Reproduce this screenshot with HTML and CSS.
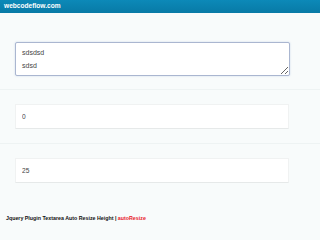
FILE: index.html
```html
<!DOCTYPE html>
<html>
<head>
<meta charset="utf-8">
<link rel="stylesheet" href="styles.css">
</head>
<body>
<header class="topbar"><span class="brand">webcodeflow.com</span></header>
<main class="content">
  <section class="row first">
    <textarea class="auto">sdsdsd
sdsd</textarea>
  </section>
  <section class="row">
    <input class="field" type="text" value="0">
  </section>
  <section class="row">
    <input class="field" type="text" value="25">
  </section>
  <p class="footer">Jquery Plugin Textarea Auto Resize Height | <span class="accent">autoResize</span></p>
</main>
</body>
</html>
```
FILE: styles.css
```css
html, body {
  margin: 0;
  padding: 0;
}
body {
  background: #f8fbfb;
  font-family: "Liberation Sans", Arial, sans-serif;
}
.topbar {
  height: 13px;
  background: linear-gradient(#0c89b8, #087aa6);
  display: flex;
  align-items: center;
  padding-left: 4px;
}
.brand {
  color: #fff;
  font-weight: bold;
  font-size: 6.6px;
  line-height: 1;
}
.content {
  display: flex;
  flex-direction: column;
}
.row {
  padding: 14px 10px 14px 15px;
  border-top: 1px solid #eef3f3;
}
.row.first {
  border-top: none;
  padding-top: 29px;
  padding-bottom: 13px;
}
.auto {
  display: block;
  box-sizing: border-box;
  width: 275px;
  height: 34px;
  margin: 0;
  padding: 3px 6px;
  border: 1px solid #aab6d0;
  border-radius: 2px;
  box-shadow: 0 0 2px rgba(110, 140, 200, 0.35);
  background: #fff;
  font-family: "Liberation Sans", Arial, sans-serif;
  font-size: 7px;
  line-height: 13px;
  color: #444;
  outline: none;
}
.field {
  display: block;
  box-sizing: border-box;
  width: 274px;
  height: 25px;
  margin: 0;
  padding: 0 6px;
  border: 1px solid #f0f2f2;
  border-bottom-color: #e6e9e9;
  border-radius: 1px;
  background: #fff;
  font-family: "Liberation Sans", Arial, sans-serif;
  font-size: 6.6px;
  color: #444;
  outline: none;
}
.footer {
  margin: 17px 0 0 6px;
  font-size: 5.3px;
  font-weight: bold;
  color: #111;
  line-height: 8px;
}
.accent {
  color: #e8202a;
}
```
